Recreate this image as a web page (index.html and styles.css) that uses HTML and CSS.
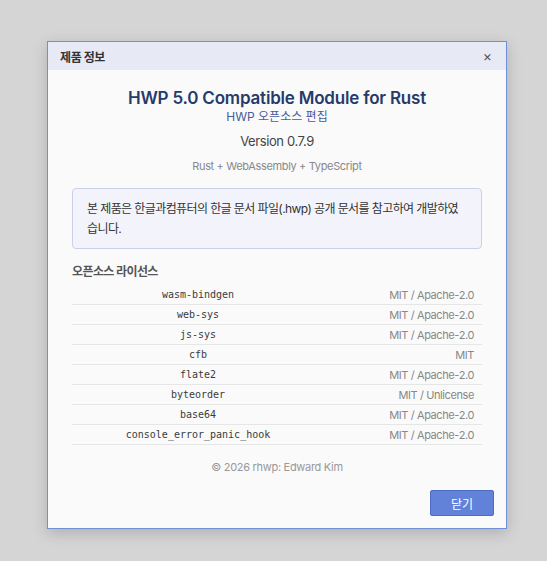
FILE: index.html
```html
<!DOCTYPE html>
<html lang="ko">
<head>
<meta charset="utf-8">
<link rel="stylesheet" href="styles.css">
</head>
<body>
<div class="dialog">
  <div class="header">
    <span class="header-title">제품 정보</span>
    <span class="close">×</span>
  </div>
  <div class="body">
    <div class="title">HWP 5.0 Compatible Module for Rust</div>
    <div class="subtitle">HWP 오픈소스 편집</div>
    <div class="version">Version 0.7.9</div>
    <div class="tech">Rust + WebAssembly + TypeScript</div>
    <div class="notice">본 제품은 한글과컴퓨터의 한글 문서 파일(.hwp) 공개 문서를 참고하여 개발하였습니다.</div>
    <div class="section">오픈소스 라이선스</div>
    <div class="table">
      <div class="row"><span class="name">wasm-bindgen</span><span class="lic">MIT / Apache-2.0</span></div>
      <div class="row"><span class="name">web-sys</span><span class="lic">MIT / Apache-2.0</span></div>
      <div class="row"><span class="name">js-sys</span><span class="lic">MIT / Apache-2.0</span></div>
      <div class="row"><span class="name">cfb</span><span class="lic">MIT</span></div>
      <div class="row"><span class="name">flate2</span><span class="lic">MIT / Apache-2.0</span></div>
      <div class="row"><span class="name">byteorder</span><span class="lic">MIT / Unlicense</span></div>
      <div class="row"><span class="name">base64</span><span class="lic">MIT / Apache-2.0</span></div>
      <div class="row"><span class="name">console_error_panic_hook</span><span class="lic">MIT / Apache-2.0</span></div>
    </div>
    <div class="copy">© 2026 rhwp: Edward Kim</div>
    <div class="actions"><button class="btn">닫기</button></div>
  </div>
</div>
</body>
</html>
```
FILE: styles.css
```css
html, body {
  margin: 0;
  padding: 0;
  background: #d5d5d5;
  font-family: Inter, "Noto Sans CJK KR", sans-serif;
}
body {
  padding: 41px 0 0 47px;
  height: 561px;
  box-sizing: border-box;
}
.dialog {
  width: 460px;
  box-sizing: border-box;
  border: 1px solid #6f8fd8;
  background: #fafafa;
  box-shadow: 0 4px 14px rgba(0,0,0,0.18);
}
.header {
  height: 28px;
  background: #e7e9f5;
  display: flex;
  align-items: center;
  justify-content: space-between;
  padding: 0 14px 0 12px;
}
.header-title {
  font-size: 12px;
  font-weight: 700;
  color: #333;
  letter-spacing: -0.4px;
}
.close {
  font-size: 14px;
  color: #555;
  line-height: 1;
}
.body {
  padding: 16px 24px 12px 24px;
  display: flex;
  flex-direction: column;
}
.title {
  text-align: center;
  font-size: 17px;
  font-weight: 600;
  letter-spacing: -0.2px;
  color: #263a6b;
  line-height: 24px;
}
.subtitle {
  text-align: center;
  font-size: 12px;
  color: #4a5b9c;
  line-height: 16px;
  margin-top: -1px;
}
.version {
  text-align: center;
  font-size: 13px;
  letter-spacing: -0.4px;
  color: #444;
  line-height: 18px;
  margin-top: 7px;
}
.tech {
  text-align: center;
  font-size: 11px;
  letter-spacing: -0.35px;
  color: #888;
  line-height: 16px;
  margin-top: 8px;
}
.notice {
  margin-top: 14px;
  border: 1px solid #cbd0e8;
  background: #f3f4fb;
  border-radius: 4px;
  padding: 10px 14px 9px 14px;
  font-size: 12px;
  letter-spacing: -0.6px;
  line-height: 20px;
  color: #333;
}
.section {
  margin-top: 14px;
  font-size: 12px;
  font-weight: 700;
  letter-spacing: -0.6px;
  color: #555;
  line-height: 18px;
}
.table {
  margin-top: 4px;
  display: flex;
  flex-direction: column;
}
.row {
  display: grid;
  grid-template-columns: 252px 1fr;
  height: 20px;
  align-items: center;
  border-bottom: 1px solid #e6e6e6;
  box-sizing: border-box;
}
.name {
  text-align: center;
  font-family: "DejaVu Sans Mono", monospace;
  font-size: 10px;
  color: #3a3a3a;
}
.lic {
  text-align: right;
  padding-right: 8px;
  font-size: 11px;
  letter-spacing: -0.4px;
  color: #888;
}
.copy {
  margin-top: 14px;
  text-align: center;
  font-size: 11px;
  letter-spacing: -0.3px;
  color: #999;
  line-height: 16px;
}
.actions {
  display: flex;
  justify-content: flex-end;
  margin-top: 15px;
  margin-right: -12px;
}
.btn {
  width: 64px;
  height: 26px;
  background: #6182d8;
  border: 1px solid #4c6cc6;
  border-radius: 2px;
  color: #fff;
  font-family: "Noto Sans CJK KR", sans-serif;
  font-size: 12px;
  padding: 0;
}
```
